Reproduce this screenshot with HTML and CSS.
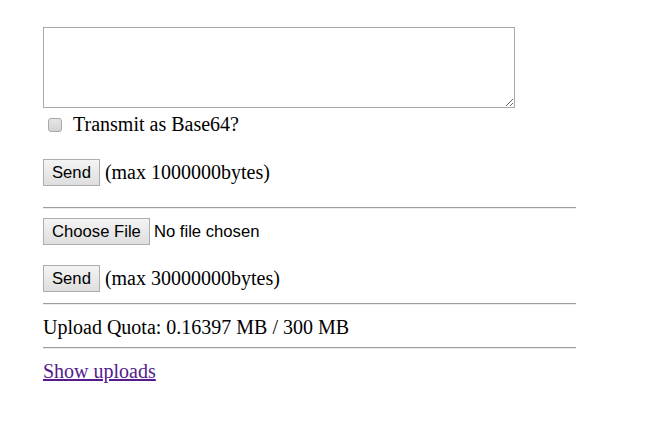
FILE: index.html
```html
<!DOCTYPE html>
<html lang="en">
<head>
<meta charset="utf-8">
<title>Upload</title>
<link rel="stylesheet" href="styles.css">
</head>
<body>
<div class="page">
  <form class="text-form">
    <textarea class="payload"></textarea>
    <label class="check-row"><input type="checkbox" class="check"> <span>Transmit as Base64?</span></label>
    <div class="send-row first"><button type="button" class="btn">Send</button> <span>(max 1000000bytes)</span></div>
  </form>
  <hr class="rule rule-1">
  <form class="file-form">
    <div class="file-row"><input type="file" class="file"></div>
    <div class="send-row second"><button type="button" class="btn">Send</button> <span>(max 30000000bytes)</span></div>
  </form>
  <hr class="rule rule-2">
  <div class="quota">Upload Quota: 0.16397 MB / 300 MB</div>
  <hr class="rule rule-3">
  <div class="links"><a href="#" class="link">Show uploads</a></div>
</div>
</body>
</html>
```

FILE: styles.css
```css
html, body {
  margin: 0;
  padding: 0;
  background: #fff;
}
.page {
  padding: 27px 0 0 43px;
  width: 533px;
  font-family: "Liberation Serif", "Times New Roman", serif;
  font-size: 20px;
  line-height: 23px;
  color: #000;
}
form { margin: 0; }
.payload {
  display: block;
  box-sizing: border-box;
  width: 472px;
  height: 81px;
  margin: 0;
  border: 1px solid #a9a9a9;
  padding: 2px;
  resize: both;
  font: 16px "Liberation Mono", monospace;
  background: #fff;
}
.check-row {
  display: flex;
  align-items: center;
  margin-top: 5px;
  height: 23px;
}
.check {
  appearance: none;
  -webkit-appearance: none;
  box-sizing: border-box;
  width: 14px;
  height: 14px;
  margin: 0 11px 0 5px;
  border: 1px solid #a8a8a8;
  border-radius: 3px;
  background: linear-gradient(#e6e6e6, #d2d2d2);
}
.send-row {
  display: flex;
  align-items: center;
  gap: 5px;
  height: 27px;
}
.send-row.first { margin-top: 23px; }
.send-row.second { margin-top: 20px; }
.btn, .file::file-selector-button {
  box-sizing: border-box;
  height: 27px;
  margin: 0;
  padding: 0 8px;
  border: 1px solid #adadad;
  border-radius: 0;
  background: linear-gradient(#f4f4f4, #dedede);
  font: 16.67px "Liberation Sans", Arial, sans-serif;
  color: #000;
}
.file::file-selector-button {
  margin-right: 4px;
}
.rule {
  box-sizing: border-box;
  width: 533px;
  height: 2px;
  margin: 0;
  border: 0;
  border-top: 1px solid #9d9d9d;
  border-bottom: 1px solid #ececec;
}
.rule-1 { margin-top: 21px; }
.rule-2 { margin-top: 11px; }
.rule-3 { margin-top: 8px; }
.file-row {
  display: flex;
  align-items: center;
  margin-top: 9px;
  height: 27px;
}
.file {
  font: 16.67px "Liberation Sans", Arial, sans-serif;
  color: #000;
  margin: 0;
}
.quota { margin-top: 11px; }
.links { margin-top: 11px; }
.link { color: #551a8b; text-decoration: underline; }
```
